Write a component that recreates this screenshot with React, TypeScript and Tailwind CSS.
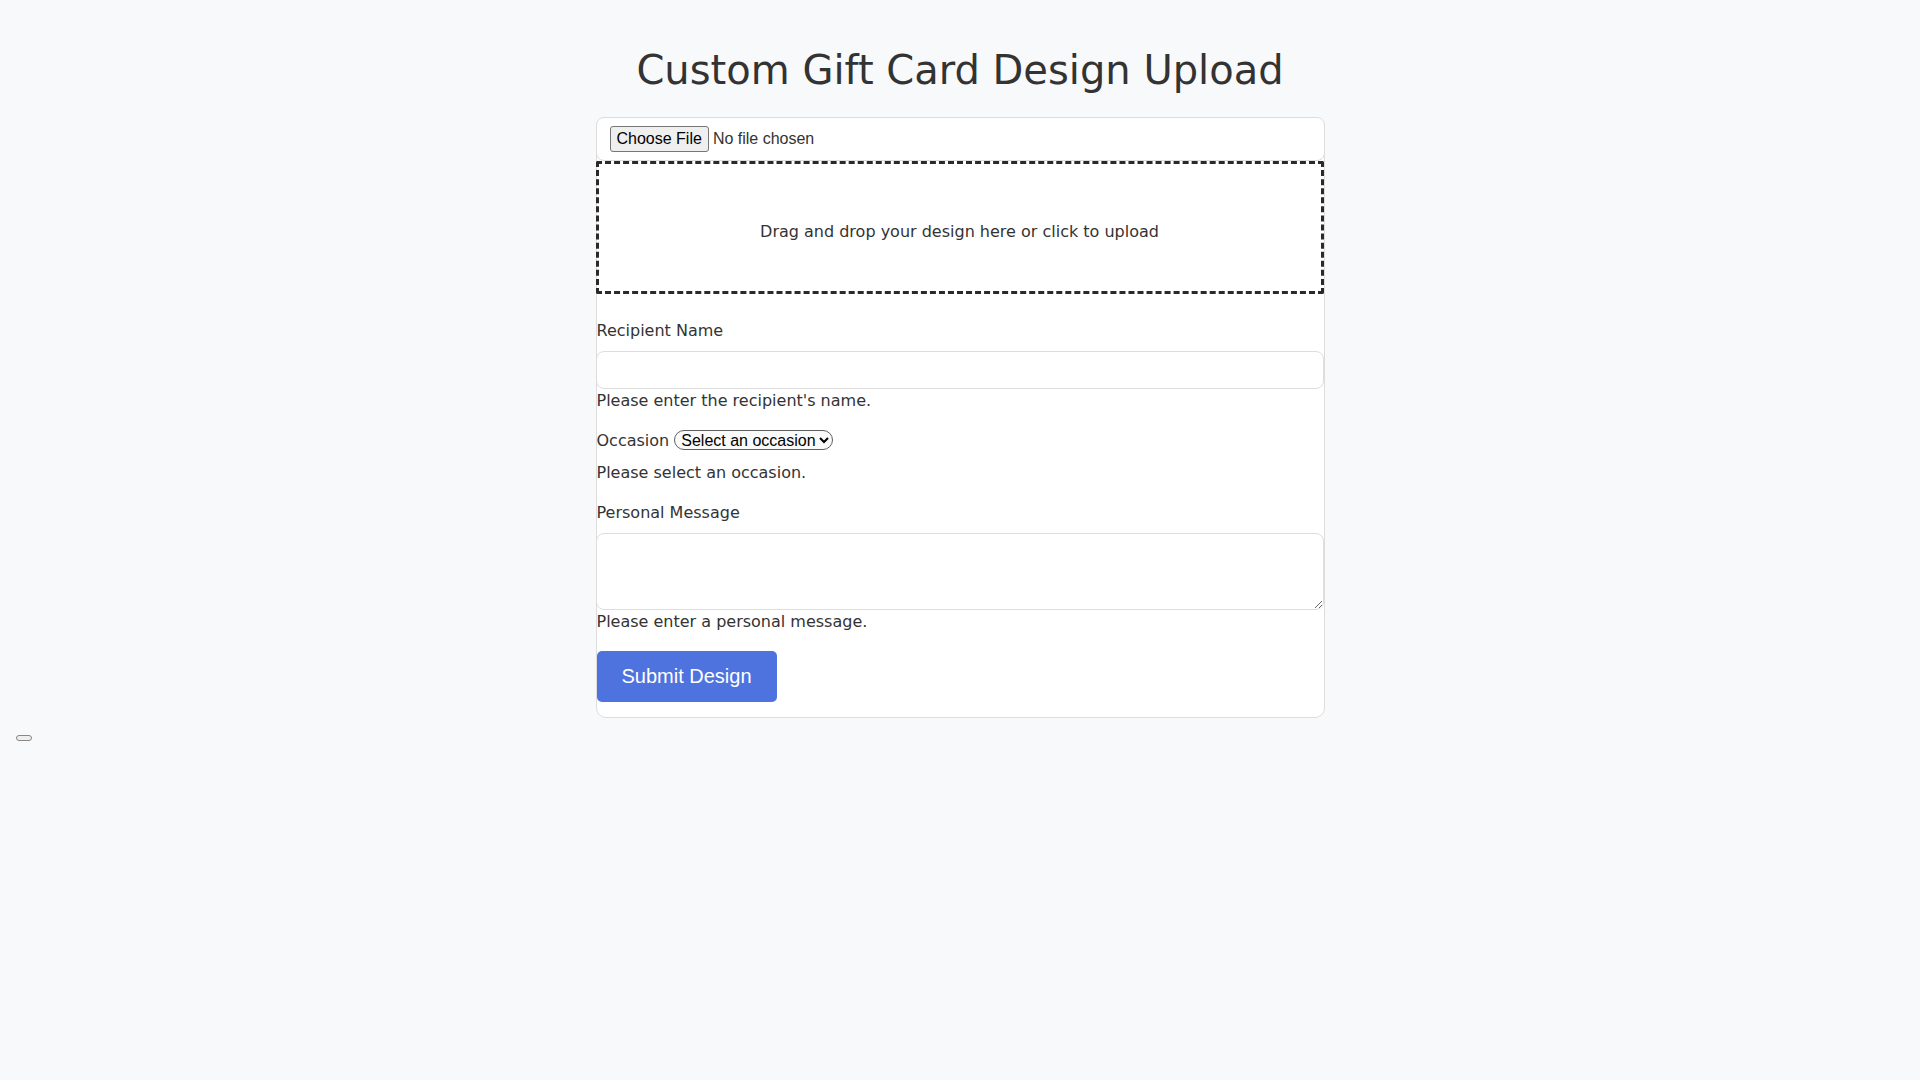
export default function App() {
  return (
    <div className="min-h-screen bg-[#f8f9fa] pt-[47px] font-['DejaVu_Sans',sans-serif] text-[16px] leading-[24px] text-[#333]">
      <h1 className="text-center text-[40px] leading-[47px] font-normal">Custom Gift Card Design Upload</h1>

      <form className="mx-auto mt-[23px] w-[729px] rounded-[10px] border border-[#ddd] bg-white pb-[15px]">
        <div className="-mx-px -mt-px">
          <input
            type="file"
            className="block h-[44px] w-full rounded-[8px] border border-[#ddd] bg-white py-[8px] pl-[13px] font-['Liberation_Sans',Arial,sans-serif] text-[16px] leading-[normal] text-[#333] file:mr-[4px] file:rounded-[3px] file:border file:border-[#767676] file:bg-[#efefef] file:px-[6px] file:py-[3px] file:font-['Liberation_Sans',Arial,sans-serif] file:text-[16px] file:leading-[18px] file:text-black"
          />
        </div>

        <div className="-ml-px flex h-[133px] items-center justify-center rounded-[2px] border-[3px] border-dashed border-[#2a2a2a] pt-[9px]">
          Drag and drop your design here or click to upload
        </div>

        <label className="mt-[25px] mb-2 block">Recipient Name</label>
        <input type="text" className="-ml-px block h-[38px] w-[calc(100%+1px)] rounded-[8px] border border-[#ddd] bg-white" />
        <div>Please enter the recipient's name.</div>

        <div className="mt-4 h-6">
          <label>Occasion </label>
          <select className="h-[20px] rounded-full border border-[#5f5f5f] bg-[#fafafa] pl-[2px] font-['Liberation_Sans',Arial,sans-serif] text-[16px] leading-[18px] text-black">
            <option>Select an occasion</option>
            <option>Birthday</option>
            <option>Anniversary</option>
            <option>Holiday</option>
            <option>Thank You</option>
          </select>
        </div>
        <div className="mt-[8px]">Please select an occasion.</div>

        <label className="mt-[16px] mb-2 block">Personal Message</label>
        <textarea className="-ml-px block h-[77px] w-[calc(100%+1px)] rounded-[8px] border border-[#ddd] bg-white" />
        <div>Please enter a personal message.</div>

        <button
          type="submit"
          className="mt-[17px] h-[51px] w-[180px] rounded-[5px] bg-[#4e73df] font-['Liberation_Sans',Arial,sans-serif] text-[20px] leading-[23px] text-white"
        >
          Submit Design
        </button>
      </form>

      <button type="button" className="mt-[17px] ml-4 block h-1.5 w-4 rounded-full border border-[#888] bg-[#efefef]" />
    </div>
  );
}
